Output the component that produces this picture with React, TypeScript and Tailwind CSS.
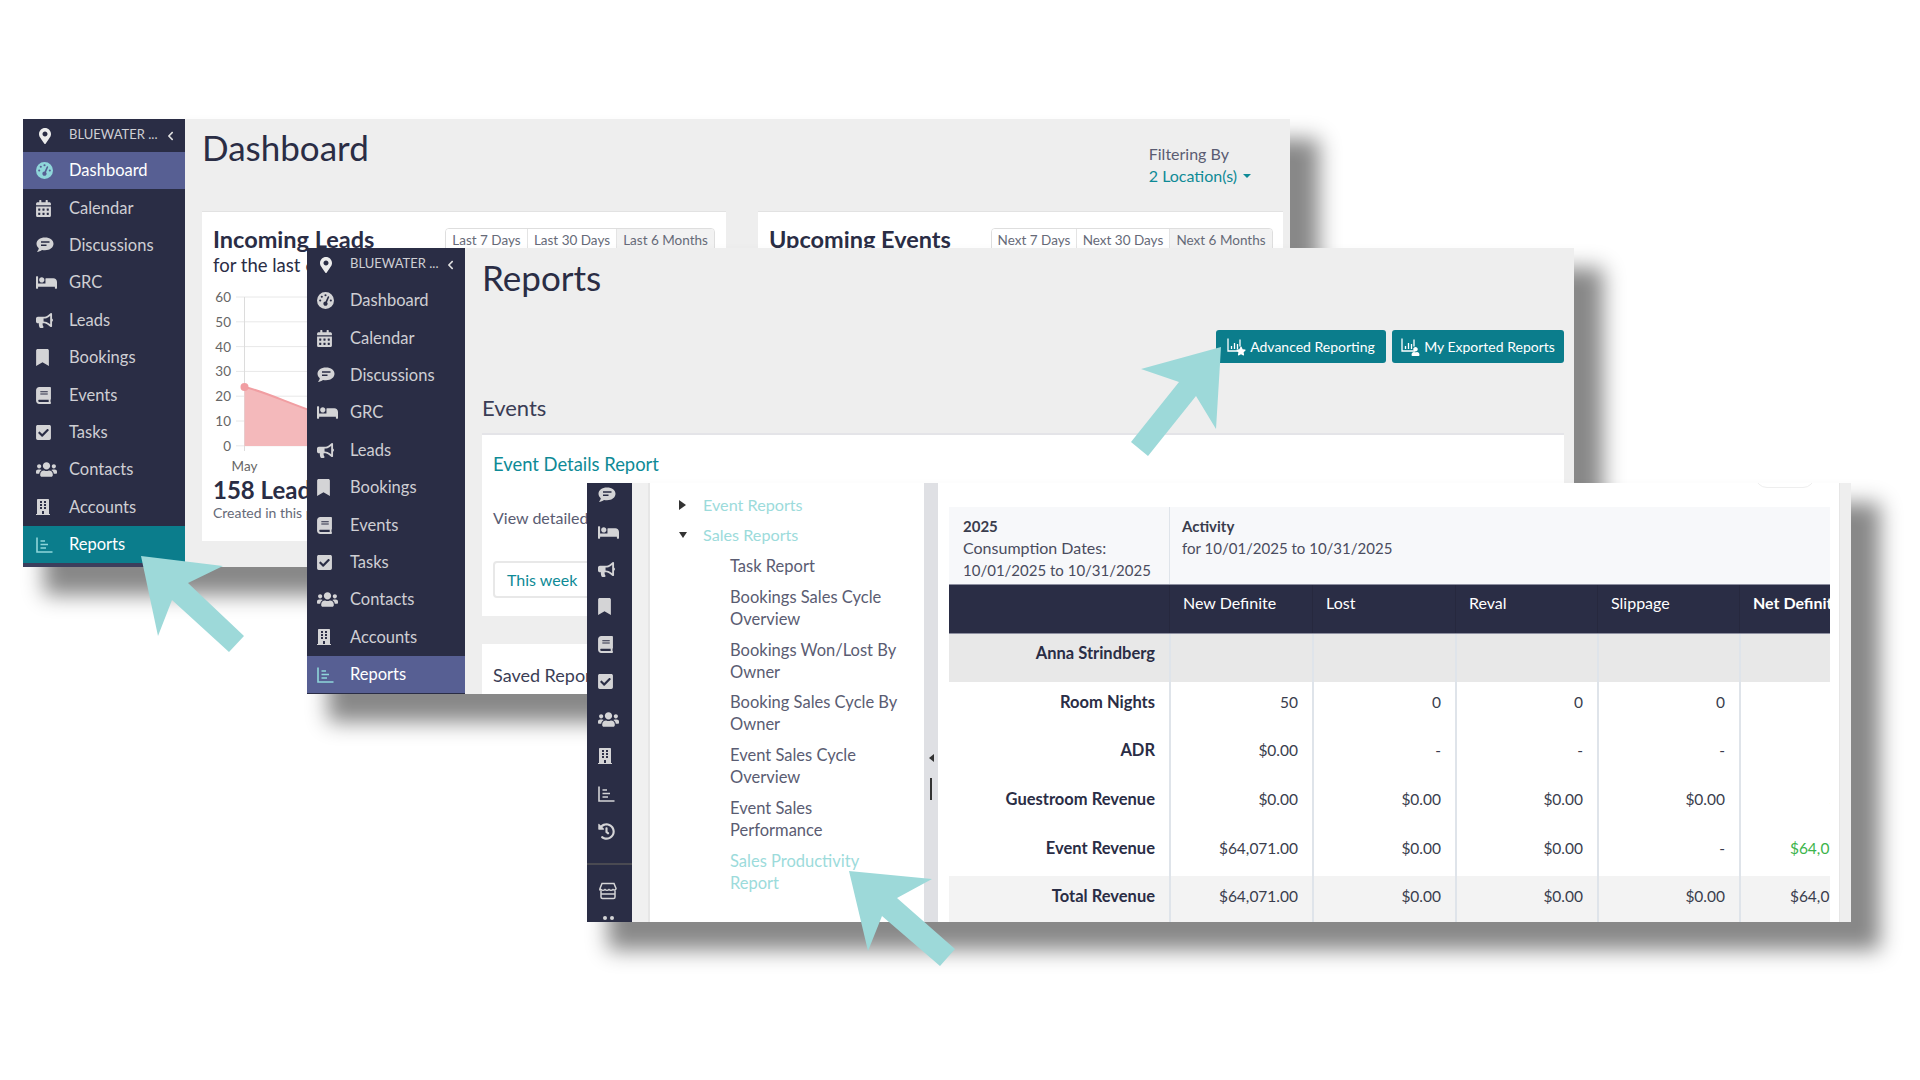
import React from "react";
import { FaBed, FaBookmark, FaBook, FaBuilding, FaBullhorn, FaCalendarAlt, FaCheckSquare, FaHistory, FaMapMarkerAlt, FaUsers, FaChevronLeft, FaStar, FaUser } from "react-icons/fa";
import { FaGaugeHigh } from "react-icons/fa6";

const Comment = ({ className }: { className?: string }) => (
  <svg viewBox="0 0 18 16" className={className}>
    <path d="M9 0.5C4 0.5 0.5 3.2 0.5 6.8c0 1.8.9 3.3 2.3 4.4-.2 1.4-1 2.6-1.9 3.6 1.9 0 3.8-.8 5.1-1.9.9.3 1.9.4 3 .4 5 0 8.500-2.900 8.500-6.500S14 .5 9 .5z" fill="currentColor" />
    <path d="M5 5h8.500M5 8.200h5.500" stroke="#2a2d45" strokeWidth="1.500" />
  </svg>
);

const ReportsIcon = ({ className }: { className?: string }) => (
  <svg viewBox="0 0 17 16" className={className} fill="none" stroke="currentColor" strokeWidth="1.600">
    <path d="M1 0.500V15H16.500" />
    <path d="M4.500 4H9M4.500 7.500H12M4.500 11H10" />
  </svg>
);

const StoreIcon = ({ className }: { className?: string }) => (
  <svg viewBox="0 0 18 18" className={className} fill="none" stroke="currentColor" strokeWidth="1.500">
    <path d="M3 1.500h12l2 5c0 1.500-2 2-3 1-1 1-3 1-4 0-1 1-3 1-4 0-1 1-3 1-4 0-1 1-1.500 .5-1-1z" />
    <path d="M2 8.500v6.500a1.500 1.500 0 0 0 1.500 1.500h11A1.500 1.500 0 0 0 16 15V8.500M2 12h14" />
  </svg>
);

const navItems: [string, React.ComponentType<{ className?: string }>, string][] = [
  ["Dashboard", FaGaugeHigh, "h-[17px] w-[17px]"],
  ["Calendar", FaCalendarAlt, "h-[17px] w-[15px]"],
  ["Discussions", Comment, "h-[16px] w-[18px]"],
  ["GRC", FaBed, "h-[21px] w-[21px]"],
  ["Leads", FaBullhorn, "h-[17px] w-[17px]"],
  ["Bookings", FaBookmark, "h-[17px] w-[13px]"],
  ["Events", FaBook, "h-[17px] w-[15px]"],
  ["Tasks", FaCheckSquare, "h-[17px] w-[15px]"],
  ["Contacts", FaUsers, "h-[17px] w-[21px]"],
  ["Accounts", FaBuilding, "h-[16px] w-[14px]"],
  ["Reports", ReportsIcon, "h-[16px] w-[17px]"],
];

function Sidebar({ active, narrow }: { active: Record<string, string>; narrow?: boolean }) {
  return (
    <div className={`flex shrink-0 flex-col bg-[#2a2d45] text-[#cfcfd4] ${narrow ? "w-[158px]" : "w-[162px]"}`}>
      <div className={`flex shrink-0 items-center pr-[11px] ${narrow ? "h-[34px] pl-[13px]" : "h-[33px] pl-[16px]"}`}>
        <FaMapMarkerAlt className="h-[16px] w-[12px] text-[#ececec]" />
        <span className="ml-[18px] flex-1 pb-[2px] text-[13px]">BLUEWATER ...</span>
        <FaChevronLeft className="h-[10px] w-[7px] text-[#e0e0e0]" />
      </div>
      {navItems.map(([name, Icon, size]) => (
        <div key={name} className={`flex h-[37.4px] shrink-0 items-center text-[16.5px] ${narrow ? "pl-[10px]" : "pl-[13px]"} ${active[name] ? active[name] + " text-white" : ""}`}>
          <div className="flex w-[33px] shrink-0 items-center">
            <Icon className={`${size} ${active[name] ? "text-[#8fd6da]" : "text-[#d4d4d6]"}`} />
          </div>
          {name}
        </div>
      ))}
    </div>
  );
}

function RangeGroup({ cells }: { cells: [string, string][] }) {
  return (
    <div className="flex h-[30px] overflow-hidden rounded-t border border-[#dedede] text-[13.5px] text-[#666a78]">
      {cells.map(([label, w], i) => (
        <div key={label} className={`${w} flex justify-center pt-[1px] ${i ? "border-l border-[#e4e4e4]" : ""} ${i === 2 ? "bg-[#f2f2f2]" : "bg-white"}`}>
          {label}
        </div>
      ))}
    </div>
  );
}

function LeadsChart() {
  const labels = ["60", "50", "40", "30", "20", "10", "0"];
  return (
    <svg width="500" height="190" className="block">
      {labels.map((l, i) => (
        <g key={l}>
          <text x="18" y={11 + i * 24.8} textAnchor="end" fontSize="13.500" fill="#666">{l}</text>
          <line x1="23" x2="500" y1={6 + i * 24.8} y2={6 + i * 24.8} stroke="#e8e8e8" />
        </g>
      ))}
      <line x1="31.500" x2="31.500" y1="6" y2="160" stroke="#dcdcdc" />
      <path d="M31.500 96 C50 100 75 112 110 124 L110 155 L31.500 155 Z" fill="#f4b9bb" />
      <path d="M31.500 96 C50 100 75 112 110 124" stroke="#f19ea2" strokeWidth="2" fill="none" />
      <circle cx="31.500" cy="96" r="4" fill="#f19ea2" />
      <text x="31.500" y="180" textAnchor="middle" fontSize="13.500" fill="#666">May</text>
    </svg>
  );
}

function Window1() {
  return (
    <div className="absolute left-[23px] top-[119px] flex h-[448px] w-[1267px] overflow-hidden bg-[#eeeeee] shadow-[25px_24px_20px_4px_#888888]">
      <div className="flex flex-col bg-[#3b3e5c]">
        <Sidebar active={{ Dashboard: "bg-[#575f93]", Reports: "bg-[#0b7d8c]" }} />
      </div>
      <div className="flex min-w-0 flex-1 flex-col pl-[17px] pr-[7px]">
        <div className="flex h-[92px] shrink-0 justify-between">
          <div className="text-[35px] leading-[56px] text-[#2a2d45]">Dashboard</div>
          <div className="pr-[32px] pt-[24px] text-[16px] leading-[22px]">
            <div className="text-[#5a5c72]">Filtering By</div>
            <div className="flex items-center text-[#0e8a96]">
              2 Location(s)
              <span className="ml-[6px] h-0 w-0 border-x-[4px] border-t-[4px] border-x-transparent border-t-[#0e8a96]" />
            </div>
          </div>
        </div>
        <div className="flex h-[330px] gap-[32px]">
          <div className="w-[524px] shrink-0 border-t border-[#e2e2e2] bg-white pl-[11px] pr-[11px] pt-[16px]">
            <div className="flex justify-between">
              <div className="text-[23.5px] font-bold leading-[22px] text-[#2a2d45]">Incoming Leads</div>
              <RangeGroup cells={[["Last 7 Days", "w-[81px]"], ["Last 30 Days", "w-[89px]"], ["Last 6 Months", "w-[98px]"]]} />
            </div>
            <div className="-mt-[5px] text-[18.5px] leading-[24px] text-[#2a2d45]">for the last 6 months</div>
            <div className="mt-[14px]"><LeadsChart /></div>
            <div className="-mt-[5px] text-[24px] font-bold leading-[28px] text-[#2a2d45]">158 Leads</div>
            <div className="-mt-[1px] text-[14px] leading-[20px] text-[#666a78]">Created in this period</div>
          </div>
          <div className="flex-1 border-t border-[#e2e2e2] bg-white pl-[11px] pr-[10px] pt-[16px]">
            <div className="flex justify-between">
              <div className="text-[23.5px] font-bold leading-[22px] text-[#2a2d45]">Upcoming Events</div>
              <RangeGroup cells={[["Next 7 Days", "w-[84px]"], ["Next 30 Days", "w-[93px]"], ["Next 6 Months", "w-[103px]"]]} />
            </div>
          </div>
        </div>
      </div>
    </div>
  );
}

function ChartBtnIcon({ star }: { star?: boolean }) {
  return (
    <span className="relative mr-[5px] inline-block h-[16px] w-[18px]">
      <svg viewBox="0 0 16 14" className="h-[14px] w-[16px]" fill="none" stroke="#ffffff" strokeWidth="1.300">
        <path d="M1 0.500V13H14" />
        <path d="M4.500 8v3M7.500 5v6M10.500 6v5M13 1.500v7" />
      </svg>
      {star ? (
        <FaStar className="absolute bottom-[-2px] right-[-1px] h-[10px] w-[10px] text-white" />
      ) : (
        <FaUser className="absolute bottom-[-2px] right-[-1px] h-[9px] w-[9px] text-white" />
      )}
    </span>
  );
}

function Window2() {
  return (
    <div className="absolute left-[307px] top-[248px] flex h-[446px] w-[1267px] overflow-hidden bg-[#eeeeee] shadow-[25px_24px_20px_4px_#888888]">
      <div className="bg-[#2a2d45]">
        <Sidebar narrow active={{ Reports: "bg-[#575f93]" }} />
      </div>
      <div className="flex min-w-0 flex-1 flex-col pl-[17px] pr-[10px]">
        <div className="h-[82px] shrink-0 text-[35px] leading-[58px] text-[#2a2d45]">Reports</div>
        <div className="flex h-[33px] shrink-0 justify-end gap-[6px]">
          {[["Advanced Reporting", "w-[170px]", true], ["My Exported Reports", "w-[172px]", false]].map(([t, w, s]) => (
            <div key={t as string} className={`${w} flex items-center justify-center rounded-[3px] bg-[#0b7d8c] pb-[1px] text-[14px] text-white`}>
              <ChartBtnIcon star={s as boolean} />
              {t}
            </div>
          ))}
        </div>
        <div className="mt-[29px] h-[41px] shrink-0 text-[22px] leading-[32px] text-[#3a3d55]">Events</div>
        <div className="h-[183px] shrink-0 border-t-2 border-[#e4e4e8] bg-white pl-[11px] pt-[17px]">
          <div className="text-[18.4px] leading-[24px] text-[#0e8a96]">Event Details Report</div>
          <div className="mt-[31px] text-[16px] leading-[22px] text-[#5a5c72]">View detailed</div>
          <div className="mt-[32px] flex h-[37px] w-[240px] items-center rounded border-2 border-[#e8e8e8] pl-[12px] text-[16px] text-[#0e8a96]">This week</div>
        </div>
        <div className="mt-[28px] flex-1 bg-white pl-[11px] pt-[19px] text-[18px] leading-[24px] text-[#3a3d55]">Saved Reports</div>
      </div>
    </div>
  );
}

const tree = [
  "Task Report",
  "Bookings Sales Cycle Overview",
  "Bookings Won/Lost By Owner",
  "Booking Sales Cycle By Owner",
  "Event Sales Cycle Overview",
  "Event Sales Performance",
];

const miniIcons: [React.ComponentType<{ className?: string }>, string][] = [
  [Comment, "h-[16px] w-[18px]"],
  [FaBed, "h-[21px] w-[21px]"],
  [FaBullhorn, "h-[17px] w-[17px]"],
  [FaBookmark, "h-[17px] w-[13px]"],
  [FaBook, "h-[17px] w-[15px]"],
  [FaCheckSquare, "h-[17px] w-[15px]"],
  [FaUsers, "h-[17px] w-[21px]"],
  [FaBuilding, "h-[16px] w-[14px]"],
  [ReportsIcon, "h-[16px] w-[17px]"],
  [FaHistory, "h-[17px] w-[17px]"],
];

const colClass = "grid grid-cols-[220px_143px_143px_142px_142px_144px]";
const heads = ["New Definite", "Lost", "Reval", "Slippage", "Net Definite"];
const rows: [string, string[], string, string][] = [
  ["Room Nights", ["50", "0", "0", "0", "50"], "h-[48px]", ""],
  ["ADR", ["$0.00", "-", "-", "-", "-"], "h-[49px]", ""],
  ["Guestroom Revenue", ["$0.00", "$0.00", "$0.00", "$0.00", "$0.00"], "h-[49px]", ""],
  ["Event Revenue", ["$64,071.00", "$0.00", "$0.00", "-", "$64,071.00"], "h-[48px]", ""],
  ["Total Revenue", ["$64,071.00", "$0.00", "$0.00", "$0.00", "$64,071.00"], "h-[46px]", "bg-[#f3f3f3]"],
];

function ReportTable() {
  return (
    <div className="w-[881px] overflow-hidden text-[15.5px] leading-[22px]">
      <div className={`${colClass} h-[77px] bg-[#f7f8fa] text-[#4a4c5e]`}>
        <div className="pl-[14px] pt-[8px] text-[15px]">
          <div className="font-bold text-[#3a3d4d]">2025</div>
          <div className="text-[16px]">Consumption Dates:</div>
          <div>10/01/2025 to 10/31/2025</div>
        </div>
        <div className="col-span-5 border-l border-[#dfe4ea] pl-[12px] pt-[8px] text-[15px]">
          <div className="font-bold text-[#3a3d4d]">Activity</div>
          <div>for 10/01/2025 to 10/31/2025</div>
        </div>
      </div>
      <div className={`${colClass} h-[50px] border-y border-[#8d8fa0] bg-[#2a2d45] text-[16px] text-white`}>
        <div />
        {heads.map((h, i) => (
          <div key={h} className={`border-l border-[#26283e] pl-[13px] pt-[7px] ${i === 4 ? "font-bold" : ""}`}>{h}</div>
        ))}
      </div>
      <div className={`${colClass} h-[48px] bg-[#e8e8e8]`}>
        <div className="pr-[14px] pt-[8px] text-right text-[16.5px] font-bold text-[#2a2d45]">Anna Strindberg</div>
        {heads.map((h) => <div key={h} className="border-l-2 border-[#dfe4ea]" />)}
      </div>
      {rows.map(([label, vals, h, bg]) => (
        <div key={label} className={`${colClass} ${h} ${bg}`}>
          <div className="pr-[14px] pt-[8.5px] text-right text-[16.5px] font-bold text-[#2a2d45]">{label}</div>
          {vals.map((v, i) => (
            <div key={i} className={`border-l-2 border-[#dfe4ea] pr-[14px] pt-[8.5px] text-right ${label === "Event Revenue" && i === 4 ? "text-[#3cb44b]" : "text-[#3a3d4d]"}`}>{v}</div>
          ))}
        </div>
      ))}
    </div>
  );
}

function Window3() {
  return (
    <div className="absolute left-[587px] top-[483px] flex h-[439px] w-[1264px] overflow-hidden bg-white shadow-[25px_24px_20px_4px_#888888]">
      <div className="flex w-[45px] shrink-0 flex-col overflow-hidden bg-[#2a2d45] text-[#d4d4d6]">
        <div className="-mt-[7px] flex w-full flex-col">
          {miniIcons.map(([Icon, size], i) => (
            <div key={i} className="flex h-[37.4px] shrink-0 items-center pl-[11px]">
              <Icon className={size} />
            </div>
          ))}
        </div>
        <div className="mt-[13px] h-[2px] w-full shrink-0 bg-[#4a4a52]" />
        <div className="mt-[17px] shrink-0 pl-[12px]"><StoreIcon className="h-[18px] w-[18px]" /></div>
        <div className="mt-[16px] flex shrink-0 gap-[3px] pl-[16px]">
          <span className="h-[4px] w-[4px] rounded-full bg-[#d4d4d6]" />
          <span className="h-[4px] w-[4px] rounded-full bg-[#d4d4d6]" />
        </div>
      </div>
      <div className="w-[18px] shrink-0 border-r-2 border-[#e6e6e6] bg-[#f0f0f0]" />
      <div className="flex w-[274px] shrink-0 flex-col gap-[8.8px] bg-white pl-[80px] pr-[20px] pt-[10.5px] text-[16.5px] leading-[22px] text-[#5a5c72]">
        <div className="-ml-[26px] flex items-center text-[16.2px] text-[#9cdbdb]">
          <span className="-ml-[25px] mr-[17px] h-0 w-0 border-y-[5px] border-l-[7px] border-y-transparent border-l-[#333]" />
          Event Reports
        </div>
        <div className="-ml-[26px] flex items-center text-[16.2px] text-[#9cdbdb]">
          <span className="-ml-[25px] mr-[16px] h-0 w-0 border-x-[4.500px] border-t-[6px] border-x-transparent border-t-[#333]" />
          Sales Reports
        </div>
        {tree.map((t) => <div key={t}>{t}</div>)}
        <div className="text-[#9cdbdb]">Sales Productivity Report</div>
      </div>
      <div className="flex w-[14px] shrink-0 flex-col items-center bg-[#dfe0e4] pt-[271px]">
        <span className="h-0 w-0 border-y-[4px] border-r-[5px] border-y-transparent border-r-[#333]" />
        <span className="mt-[16px] h-[22px] w-[2px] bg-[#333]" />
      </div>
      <div className="relative flex-1 pl-[11px] pt-[24px]">
        <div className="absolute right-[24px] top-[-16px] h-[21px] w-[60px] rounded-b-[12px] border border-[#eeeeee]" />
        <ReportTable />
      </div>
      <div className="w-[12px] shrink-0 border-l border-[#e6e6e6] bg-[#eeeeee]" />
    </div>
  );
}

function Arrows() {
  const arrows = [
    "141,556 223,566 188,583 244,636 229,652 172,600 158,636",
    "1221,347 1141,369 1179,382 1131,442 1148,456 1196,396 1216,429",
    "849,871 932,879 897,898 955,949 940,966 882,916 868,951",
  ];
  return (
    <svg className="pointer-events-none absolute left-0 top-0 h-[1080px] w-[1920px]">
      {arrows.map((p) => <polygon key={p} points={p} fill="#9dd9d9" />)}
    </svg>
  );
}

export default function App() {
  return (
    <div className="relative h-[1080px] w-[1920px] overflow-hidden bg-white font-['Lato',sans-serif]">
      <Window1 />
      <Window2 />
      <Window3 />
      <Arrows />
    </div>
  );
}
